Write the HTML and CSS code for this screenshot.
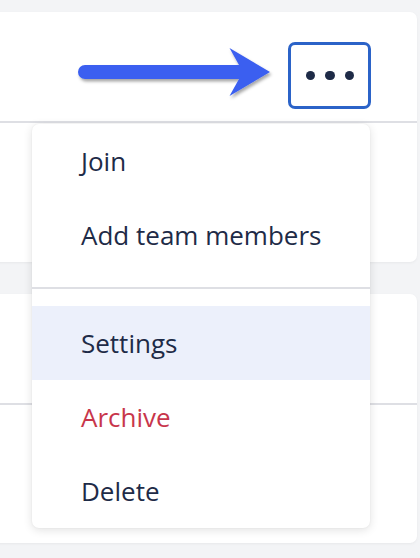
FILE: index.html
```html
<!DOCTYPE html>
<html>
<head>
<meta charset="utf-8">
<link rel="stylesheet" href="styles.css">
</head>
<body>
<div class="page">
  <section class="card">
    <div class="card-head">
      <button class="more-btn" aria-label="More">
        <span class="dot"></span><span class="dot"></span><span class="dot"></span>
      </button>
    </div>
    <div class="card-body"></div>
  </section>
  <section class="card">
    <div class="card-head"></div>
    <div class="card-body"></div>
  </section>
</div>

<svg class="pointer" width="210" height="70" viewBox="70 40 210 70">
  <defs>
    <filter id="sh" x="-10%" y="-30%" width="130%" height="180%">
      <feDropShadow dx="1.5" dy="2.5" stdDeviation="1.8" flood-color="#000" flood-opacity="0.35"/>
    </filter>
  </defs>
  <path filter="url(#sh)" fill="#3a5ff0" d="M85,65 L239,65 L229.5,48 L270,72 L229.5,96 L239,79 L85,79 A7,7 0 0 1 85,65 Z"/>
</svg>

<ul class="menu">
  <li class="item">Join</li>
  <li class="item">Add team members</li>
  <li class="sep"></li>
  <li class="item active">Settings</li>
  <li class="item danger">Archive</li>
  <li class="item">Delete</li>
</ul>
</body>
</html>
```

FILE: styles.css
```css
html, body {
  margin: 0;
  padding: 0;
}
body {
  background: #f3f4f6;
  width: 420px;
  height: 558px;
  overflow: hidden;
  position: relative;
  font-family: "Open Sans", "Lato", sans-serif;
}
.page {
  display: flex;
  flex-direction: column;
  gap: 32px;
  padding-top: 12px;
}
.card {
  margin-left: -10px;
  width: 427px;
  height: 250px;
  background: #fff;
  border-radius: 7px;
  box-shadow: 0 1px 3px rgba(0, 0, 0, 0.05);
  display: flex;
  flex-direction: column;
}
.card + .card {
  height: 249px;
}
.card-head {
  height: 111px;
  border-bottom: 2px solid #dedfe4;
  display: flex;
  justify-content: flex-end;
  align-items: flex-start;
  padding-right: 46px;
  box-sizing: border-box;
}
.card-body {
  flex: 1;
}
.more-btn {
  margin-top: 30px;
  width: 83px;
  height: 67px;
  border: 3px solid #2b63c8;
  border-radius: 7px;
  background: #fff;
  display: flex;
  align-items: center;
  justify-content: center;
  gap: 10px;
  padding: 0 0 0 1px;
  box-sizing: border-box;
}
.dot {
  width: 9.5px;
  height: 9.5px;
  border-radius: 50%;
  background: #1e2b47;
}
.pointer {
  position: absolute;
  left: 70px;
  top: 40px;
}
.menu {
  position: absolute;
  left: 32px;
  top: 124px;
  width: 338px;
  margin: 0;
  padding: 0;
  list-style: none;
  background: #fff;
  border-radius: 7px;
  box-shadow: 0 2px 10px rgba(0, 0, 0, 0.12), 0 0 2px rgba(0, 0, 0, 0.06);
  overflow: hidden;
}
.item {
  height: 74px;
  display: flex;
  align-items: center;
  padding-left: 49px;
  font-size: 26px;
  color: #1e2b47;
}
.sep {
  height: 2px;
  margin: 15px 0 17px;
  background: #dedfe4;
}
.active {
  background: #ecf0fb;
}
.danger {
  color: #c8364b;
}
```
